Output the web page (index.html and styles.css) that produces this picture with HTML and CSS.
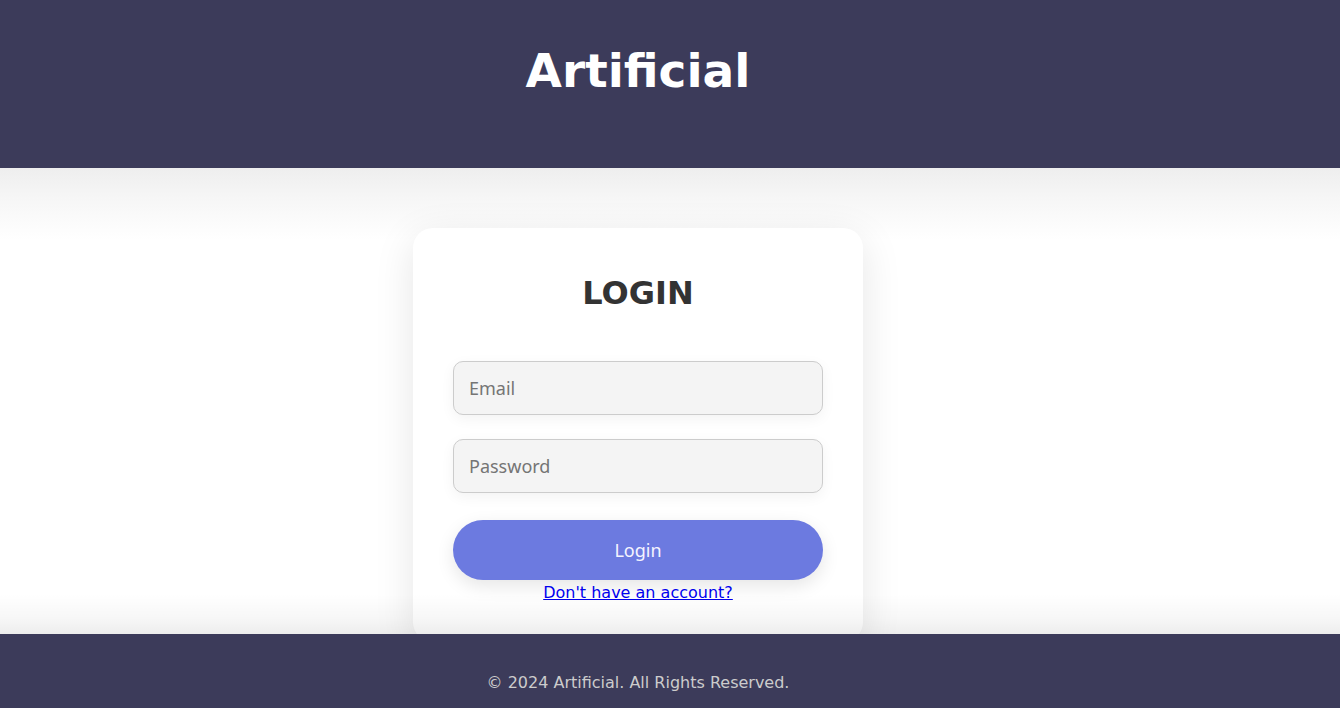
FILE: index.html
```html
<!DOCTYPE html>
<html lang="en">

<head>
    <meta charset="UTF-8">
    <meta name="viewport" content="width=device-width, initial-scale=1.0">
    <link rel="stylesheet" href="styles.css">
    <title>Artificial - Login</title>
</head>

<body>
    <header class="cabecera">
        <h1>Artificial</h1>
    </header>

    <main class="contenido">
        <div class="tarjeta">
            <h2>LOGIN</h2>
            <form class="formulario" onsubmit="return false;">
                <input type="email" class="campo" placeholder="Email">
                <input type="password" class="campo" placeholder="Password">
                <button type="submit" class="boton">Login</button>
            </form>
            <p class="registro"><a href="#">Don't have an account?</a></p>
        </div>
    </main>

    <footer class="pie">
        <p>&copy; 2024 Artificial. All Rights Reserved.</p>
    </footer>
</body>

</html>
```

FILE: styles.css
```css
body {
    font-family: "DejaVu Sans", sans-serif;
    background-color: #fff;
    color: #333;
    margin: 0;
}

.cabecera {
    background-color: #3c3b5a;
    color: white;
    height: 168px;
    box-sizing: border-box;
    padding: 20px 64px 0 0;
    text-align: center;
}

.cabecera h1 {
    margin: 23px 0;
    font-size: 47px;
}

/* sombra suave bajo la cabecera */
.contenido {
    height: 466px;
    box-sizing: border-box;
    padding: 60px 64px 0 0;
    background: linear-gradient(to bottom, #eeeeee 0, #f6f6f6 30px, #ffffff 72px);
}

.tarjeta {
    width: 450px;
    box-sizing: border-box;
    margin: 0 auto;
    padding: 46px 40px 40px;
    background-color: #fff;
    border-radius: 20px;
    box-shadow: 0 10px 40px rgba(0, 0, 0, 0.1);
    text-align: center;
}

.tarjeta h2 {
    margin: 0 0 49px;
    font-size: 32px;
    color: #333;
}

.formulario {
    display: flex;
    flex-direction: column;
}

.campo {
    width: 100%;
    box-sizing: border-box;
    padding: 14px 15px;
    margin-bottom: 24px;
    font-family: "Noto Sans", sans-serif;
    font-size: 18px;
    background-color: #f4f4f4;
    border: 1px solid #ccc;
    border-radius: 10px;
    box-shadow: 0 4px 14px rgba(0, 0, 0, 0.05);
    outline: none;
}

.campo::placeholder {
    color: #757575;
}

.campo + .campo {
    margin-bottom: 27px;
}

.boton {
    width: 100%;
    padding: 18px;
    font-family: "Noto Sans", sans-serif;
    font-size: 18px;
    color: #f4f4ff;
    background-color: #6c7ae0;
    border: none;
    border-radius: 30px;
    box-shadow: 0 6px 18px rgba(0, 0, 0, 0.1);
    cursor: pointer;
}

.registro {
    margin: 3px 0 0;
    font-size: 16px;
}

.registro a {
    color: #0000ee;
}

.pie {
    position: relative;
    background-color: #3c3b5a;
    color: #ccc;
    text-align: center;
    padding: 23px 64px 22px 0;
}

/* degradado que cae sobre la tarjeta */
.pie::before {
    content: "";
    position: absolute;
    left: 0;
    right: 0;
    top: -40px;
    height: 40px;
    background: linear-gradient(to bottom, rgba(0, 0, 0, 0), rgba(0, 0, 0, 0.03) 60%, rgba(0, 0, 0, 0.07));
}

.pie p {
    margin: 16px 0;
    font-size: 16px;
}
```
